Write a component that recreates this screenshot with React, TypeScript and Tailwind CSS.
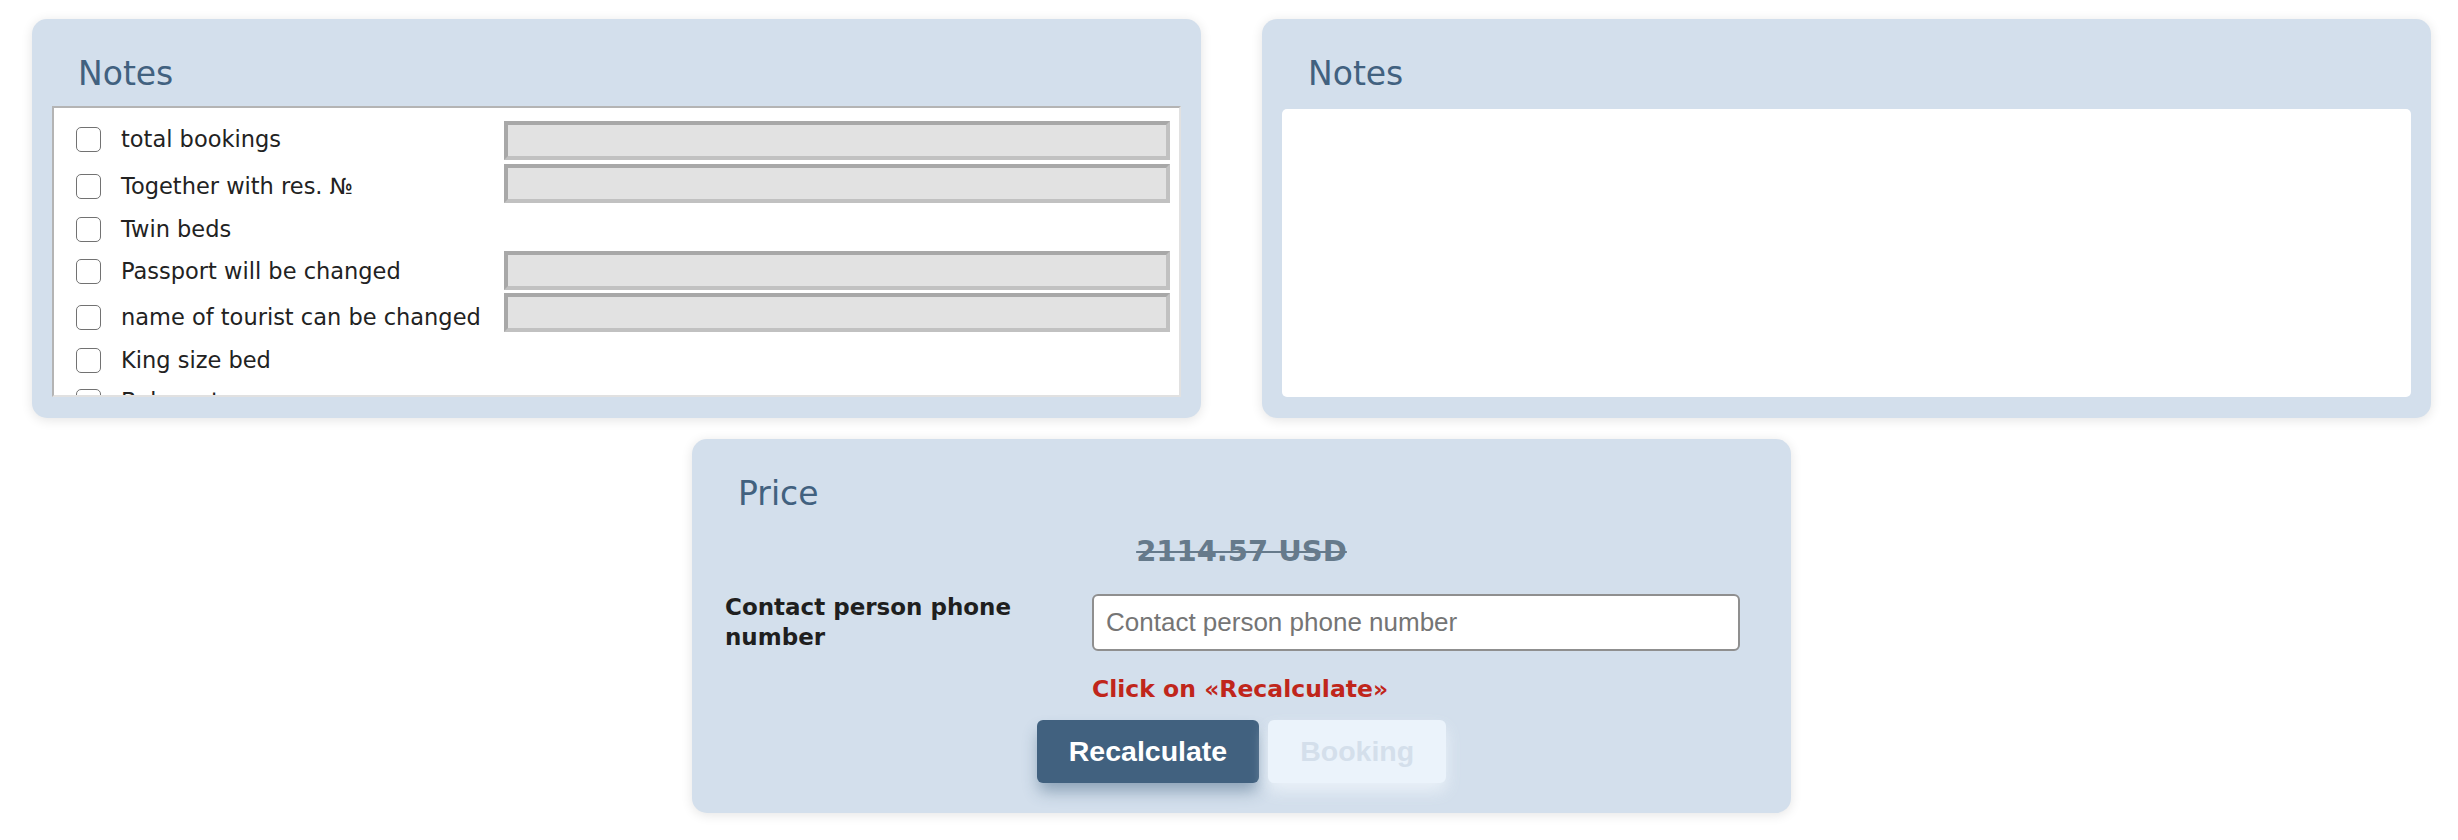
import React from 'react';

interface NoteOption {
  label: string;
  withInput: boolean;
  rowClass: string;
  labelClass: string;
}

// Opciones de la lista de notas (alturas ajustadas a la maqueta)
const noteOptions: NoteOption[] = [
  { label: 'total bookings', withInput: true, rowClass: 'h-[43px]', labelClass: 'pt-[7px]' },
  { label: 'Together with res. №', withInput: true, rowClass: 'h-[43px]', labelClass: 'pt-[11px]' },
  { label: 'Twin beds', withInput: false, rowClass: 'h-[44px]', labelClass: 'pt-[11px]' },
  { label: 'Passport will be changed', withInput: true, rowClass: 'h-[42px]', labelClass: 'pt-[9px]' },
  { label: 'name of tourist can be changed', withInput: true, rowClass: 'h-[44px]', labelClass: 'pt-[13px]' },
  { label: 'King size bed', withInput: false, rowClass: 'h-[42px]', labelClass: 'pt-[12px]' },
  { label: 'Baby cot', withInput: false, rowClass: 'h-[40px]', labelClass: 'pt-[11px]' },
];

const cardClass =
  'rounded-[15px] bg-[#d3dfec] shadow-[0_2px_12px_rgba(0,0,0,0.11)]';

const titleClass =
  "text-[33px] leading-[40px] text-[#41617f] font-['DejaVu_Sans',sans-serif]";

const NotesList: React.FC = () => (
  <div className={`${cardClass} flex h-[399px] w-[1169px] flex-col px-[20px] pt-[35px] pb-[21px]`}>
    <h2 className={`${titleClass} pl-[26px]`}>Notes</h2>
    <div className="mt-[12px] flex-1 overflow-hidden border-2 border-t-[#b4b4b4] border-l-[#b4b4b4] border-r-[#e1e1e1] border-b-[#e1e1e1] bg-white pt-[11px]">
      {noteOptions.map((opt) => (
        <div key={opt.label} className={`flex items-start ${opt.rowClass}`}>
          <label className={`flex w-[450px] items-center gap-[20px] pl-[22px] ${opt.labelClass}`}>
            <input
              type="checkbox"
              className="h-[25px] w-[25px] shrink-0 appearance-none rounded-[5px] border-[1.5px] border-[#727272] bg-white"
            />
            <span className="text-[22.5px] leading-[26px] text-[#222]">{opt.label}</span>
          </label>
          {opt.withInput && (
            <input
              type="text"
              disabled
              className="mt-[2px] h-[39px] w-[666px] border-4 border-t-[#a8a8a8] border-l-[#a8a8a8] border-r-[#c1c1c1] border-b-[#c1c1c1] bg-[#e2e2e2]"
            />
          )}
        </div>
      ))}
    </div>
  </div>
);

const NotesText: React.FC = () => (
  <div className={`${cardClass} flex h-[399px] w-[1169px] flex-col px-[20px] pt-[35px] pb-[21px]`}>
    <h2 className={`${titleClass} pl-[26px]`}>Notes</h2>
    <div className="mt-[15px] flex-1 rounded-[5px] bg-white" />
  </div>
);

const PriceCard: React.FC = () => (
  <div className={`${cardClass} ml-[660px] w-[1099px] pt-[35px] pb-[30px]`}>
    <h2 className={`${titleClass} pl-[46px]`}>Price</h2>

    <div className="mt-[20px] text-center text-[29px] leading-[34px] font-bold text-[#667a8b] line-through">
      2114.57 USD
    </div>

    {/* Teléfono de contacto */}
    <div className="mt-[24px] flex items-center pl-[33px]">
      <div className="w-[367px] pr-[20px] text-[23px] leading-[30px] font-bold text-[#1f1f1f]">
        Contact person phone number
      </div>
      <input
        type="text"
        placeholder="Contact person phone number"
        className="h-[57px] w-[648px] rounded-[6px] border-2 border-[#8f8f8f] bg-white px-[12px] font-['Liberation_Sans',Arial,sans-serif] text-[26px] text-[#222] outline-none placeholder:text-[#757575]"
      />
    </div>

    <div className="mt-[24px] pl-[400px] text-[23.5px] leading-[27px] font-bold text-[#c0261b]">
      Click on «Recalculate»
    </div>

    <div className="mt-[17px] flex justify-center gap-[9px] font-['Liberation_Sans',Arial,sans-serif]">
      <button className="h-[63px] rounded-[6px] bg-[#41617f] px-8 text-[28.5px] font-bold text-white shadow-[0_10px_16px_-2px_rgba(52,86,118,0.45)]">
        Recalculate
      </button>
      <button
        disabled
        className="h-[63px] rounded-[6px] bg-[#ebf3fb] px-8 text-[28.5px] font-bold text-[#d4dfeb] shadow-[0_8px_16px_rgba(236,243,250,0.9)]"
      >
        Booking
      </button>
    </div>
  </div>
);

export default function App() {
  return (
    <div className="min-h-[840px] bg-white pt-[19px] pl-[32px] font-['DejaVu_Sans',sans-serif]">
      <div className="flex gap-[61px]">
        <NotesList />
        <NotesText />
      </div>
      <div className="mt-[21px]">
        <PriceCard />
      </div>
    </div>
  );
}
